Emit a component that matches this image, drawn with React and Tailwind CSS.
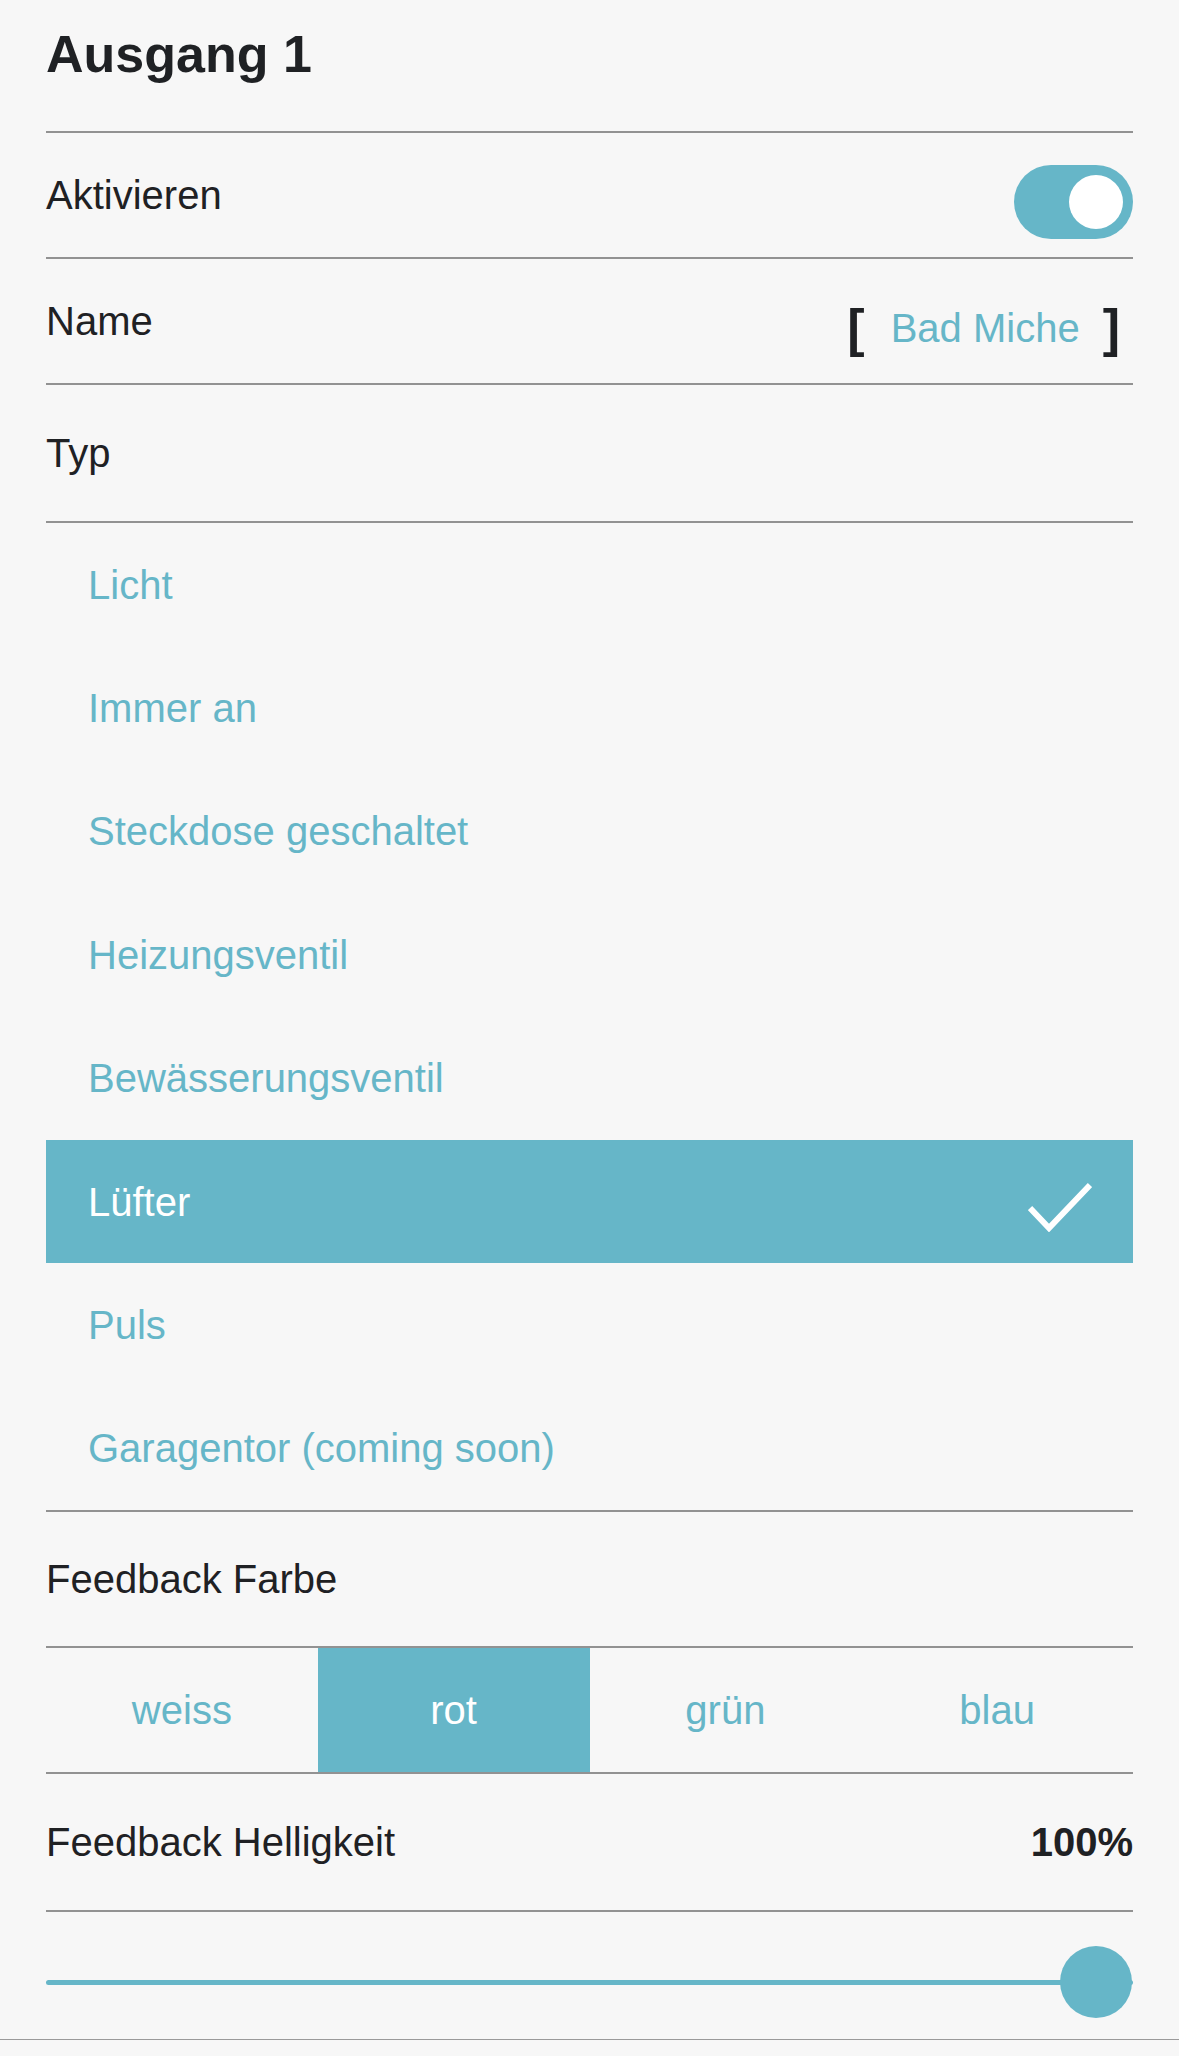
import React, { useState } from 'react';

const types = [
  'Licht',
  'Immer an',
  'Steckdose geschaltet',
  'Heizungsventil',
  'Bewässerungsventil',
  'Lüfter',
  'Puls',
  'Garagentor (coming soon)',
];

const colors = ['weiss', 'rot', 'grün', 'blau'];

const Check = () => (
  <svg width="64" height="50" viewBox="0 0 64 50" className="mt-[11px]">
    <path d="M2 26 L21 46 L62 3" fill="none" stroke="#ffffff" strokeWidth="6" strokeLinecap="butt" strokeLinejoin="miter" />
  </svg>
);

const App = () => {
  const [enabled, setEnabled] = useState(true);
  const [type, setType] = useState('Lüfter');
  const [color, setColor] = useState('rot');

  return (
    <div className="min-h-screen bg-[#f7f7f7] text-[#1f2124] font-['Liberation_Sans',Arial,sans-serif]">
      <div className="px-[46px]">
        {/* Title */}
        <div className="h-[133px] pt-[28px] border-b-2 border-[#929292]">
          <h1 className="text-[52px] leading-[52px] font-bold">Ausgang 1</h1>
        </div>

        {/* Aktivieren */}
        <div className="h-[126px] flex items-center justify-between border-b-2 border-[#929292]">
          <span className="text-[40px] leading-none">Aktivieren</span>
          <button
            onClick={() => setEnabled(!enabled)}
            className={`mt-[14px] w-[119px] h-[74px] rounded-full flex items-center px-[10px] ${enabled ? 'bg-[#66b6c8] justify-end' : 'bg-[#cfcfcf] justify-start'}`}
          >
            <span className="w-[54px] h-[54px] rounded-full bg-white" />
          </button>
        </div>

        {/* Name */}
        <div className="h-[126px] flex items-center justify-between border-b-2 border-[#929292]">
          <span className="text-[40px] leading-none">Name</span>
          <div className="mt-[14px] mr-[13px] flex items-center">
            <span className="text-[52px] leading-none font-bold">[</span>
            <span className="ml-[26px] mr-[23px] text-[40px] leading-none text-[#66b6c8]">Bad Miche</span>
            <span className="text-[52px] leading-none font-bold">]</span>
          </div>
        </div>

        {/* Typ */}
        <div className="h-[138px] flex items-center border-b-2 border-[#929292]">
          <span className="text-[40px] leading-none">Typ</span>
        </div>

        {/* Type options */}
        <div className="h-[989px] grid grid-rows-8 border-b-2 border-[#929292]">
          {types.map((t) => {
            const active = t === type;
            return (
              <div
                key={t}
                onClick={() => setType(t)}
                className={`flex items-center justify-between pl-[42px] pr-[41px] cursor-pointer ${active ? 'bg-[#66b6c8] text-white' : 'text-[#66b6c8]'}`}
              >
                <span className="text-[40px] leading-none">{t}</span>
                {active && <Check />}
              </div>
            );
          })}
        </div>

        {/* Feedback Farbe */}
        <div className="h-[136px] flex items-center border-b-2 border-[#929292]">
          <span className="text-[40px] leading-none">Feedback Farbe</span>
        </div>

        <div className="h-[126px] grid grid-cols-4 border-b-2 border-[#929292]">
          {colors.map((c) => (
            <button
              key={c}
              onClick={() => setColor(c)}
              className={`flex items-center justify-center text-[40px] leading-none ${c === color ? 'bg-[#66b6c8] text-white' : 'text-[#66b6c8]'}`}
            >
              {c}
            </button>
          ))}
        </div>

        {/* Feedback Helligkeit */}
        <div className="h-[138px] flex items-center justify-between border-b-2 border-[#929292]">
          <span className="text-[40px] leading-none">Feedback Helligkeit</span>
          <span className="text-[40px] leading-none font-bold">100%</span>
        </div>

        {/* Slider */}
        <div className="h-[127px] pt-[13px] flex items-center">
          <div className="relative flex-1 h-[5px] rounded-full bg-[#66b6c8]">
            <div className="absolute right-[1px] top-1/2 -translate-y-1/2 w-[72px] h-[72px] rounded-full bg-[#66b6c8]" />
          </div>
        </div>
      </div>
      <div className="h-[17px] border-t border-[#9a9a9a]" />
    </div>
  );
};

export default App;
